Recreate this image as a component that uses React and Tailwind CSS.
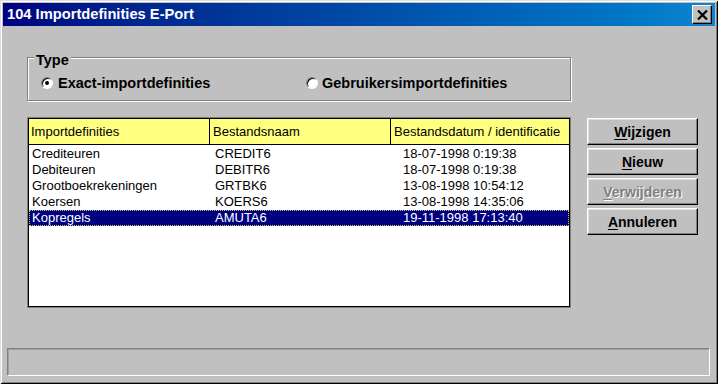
import React from "react";

const font = { fontFamily: '"Liberation Sans", Arial, sans-serif' };

function Btn({ letter, rest, disabled }) {
  return (
    <div className="h-[27px] w-[111px] border border-t-white border-l-white border-r-black border-b-black shadow-[inset_-1px_-1px_#808080,inset_1px_1px_#dfdfdf] flex items-center justify-center">
      <span
        className={
          "text-[14px] font-bold leading-none " +
          (disabled ? "text-[#808080] [text-shadow:1px_1px_0_#ffffff]" : "text-black")
        }
      >
        <span className="underline underline-offset-2">{letter}</span>
        {rest}
      </span>
    </div>
  );
}

function Radio({ checked }) {
  return (
    <div className="w-[12px] h-[12px] rounded-full bg-white border border-t-[#808080] border-l-[#808080] border-r-white border-b-white shadow-[inset_1px_1px_#000000] flex items-center justify-center shrink-0">
      {checked && <div className="w-[4px] h-[4px] rounded-full bg-black" />}
    </div>
  );
}

const rows = [
  ["Crediteuren", "CREDIT6", "18-07-1998 0:19:38"],
  ["Debiteuren", "DEBITR6", "18-07-1998 0:19:38"],
  ["Grootboekrekeningen", "GRTBK6", "13-08-1998 10:54:12"],
  ["Koersen", "KOERS6", "13-08-1998 14:35:06"],
  ["Kopregels", "AMUTA6", "19-11-1998 17:13:40"],
];

export default function App() {
  return (
    <div
      style={font}
      className="w-[718px] h-[384px] bg-[#c0c0c0] p-[3px] flex flex-col shadow-[inset_1px_1px_#dfdfdf,inset_-1px_-1px_#000000,inset_2px_2px_#ffffff,inset_-2px_-2px_#808080] overflow-hidden"
    >
      {/* Title bar */}
      <div className="h-[23px] shrink-0 bg-linear-to-r from-[#000080] to-[#1084d0] flex items-center justify-between pl-[4px] pr-[3px]">
        <span className="text-white font-bold text-[14.7px] leading-none">
          104 Importdefinities E-Port
        </span>
        <div className="w-[20px] h-[19px] bg-[#c0c0c0] border border-t-white border-l-white border-r-black border-b-black shadow-[inset_-1px_-1px_#808080] flex items-center justify-center">
          <svg width="11" height="10" viewBox="0 0 11 10">
            <path d="M1 0.5 L10 9.5 M10 0.5 L1 9.5" stroke="#000" strokeWidth="2.2" fill="none" />
          </svg>
        </div>
      </div>

      {/* Body */}
      <div className="flex-1 flex flex-col pl-[24px] pt-[31px]">
        {/* Group box */}
        <div className="relative w-[544px] h-[44px] border border-[#808080] shadow-[inset_1px_1px_#ffffff,1px_1px_#ffffff]">
          <span className="absolute -top-[6px] left-[6px] px-[2px] bg-[#c0c0c0] text-[14.5px] font-bold leading-[16px] text-black">
            Type
          </span>
          <div className="flex items-center pt-[17px] pl-[13px] h-full box-border">
            <div className="flex items-center gap-[5px] w-[265px] self-start">
              <Radio checked />
              <span className="text-[14.5px] font-bold leading-[16px] text-black">Exact-importdefinities</span>
            </div>
            <div className="flex items-center gap-[4px] self-start">
              <Radio />
              <span className="text-[14.5px] font-bold leading-[16px] text-black">Gebruikersimportdefinities</span>
            </div>
          </div>
        </div>

        {/* List + buttons */}
        <div className="flex gap-[16px] mt-[16px]">
          <div className="w-[544px] h-[191px] border border-[#808080]">
            <div className="w-full h-full border border-black bg-white text-[13px] text-black">
              <div className="flex h-[26px] bg-[#ffff80] border-b border-black">
                <div className="w-[181px] border-r border-black pl-[2px] flex items-center">Importdefinities</div>
                <div className="w-[181px] border-r border-black pl-[3px] flex items-center">Bestandsnaam</div>
                <div className="flex-1 pl-[3px] flex items-center">Bestandsdatum / identificatie</div>
              </div>
              <div className="pt-[1px]">
                {rows.map((r, i) => {
                  const sel = i === rows.length - 1;
                  return (
                    <div
                      key={i}
                      className={
                        "flex h-[16px] leading-[14px] border " +
                        (sel
                          ? "bg-[#000080] text-white border-dotted border-[#c8c870]"
                          : "border-transparent")
                      }
                    >
                      <div className="w-[181px] pl-[2px]">{r[0]}</div>
                      <div className="w-[181px] pl-[4px]">{r[1]}</div>
                      <div className="flex-1 pl-[11px]">{r[2]}</div>
                    </div>
                  );
                })}
              </div>
            </div>
          </div>

          <div className="flex flex-col gap-[3px] mt-[1px]">
            <Btn letter="W" rest="ijzigen" />
            <Btn letter="N" rest="ieuw" />
            <Btn letter="V" rest="erwijderen" disabled />
            <Btn letter="A" rest="nnuleren" />
          </div>
        </div>
      </div>

      {/* Status bar */}
      <div className="shrink-0 ml-[4px] mr-[5px] mb-[5px] h-[28px] border border-t-[#808080] border-l-[#808080] border-r-white border-b-white shadow-[inset_1px_1px_#a0a0a0]" />
    </div>
  );
}
